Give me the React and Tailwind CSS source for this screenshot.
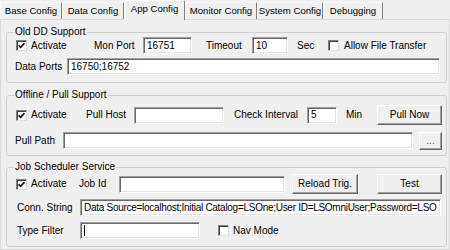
import React from 'react'

function Check({ checked }) {
  return (
    <span className="w-[11px] h-[11px] shrink-0 bg-white border border-t-[#808080] border-l-[#808080] border-r-[#dcdcdc] border-b-[#dcdcdc] shadow-[inset_1px_1px_0_#404040] flex items-center justify-center">
      {checked && (
        <svg width="7" height="7" viewBox="0 0 7 7">
          <path d="M0.6 3.4 L2.6 5.4 L6.4 1.2" fill="none" stroke="#000" strokeWidth="1.6" />
        </svg>
      )}
    </span>
  )
}

function TextBox({ className = '', value, caret }) {
  return (
    <div className={`h-[17px] shrink-0 bg-white border border-t-[#a0a0a0] border-l-[#a0a0a0] border-r-white border-b-white shadow-[inset_1px_1px_0_#696969,inset_-1px_-1px_0_#e3e3e3] flex items-center pl-[3px] overflow-hidden whitespace-nowrap ${className}`}>
      {caret && <span className="w-px h-[11px] bg-black" />}
      {value}
    </div>
  )
}

function Button({ className = '', children }) {
  return (
    <div className={`shrink-0 bg-[#f0f0f0] border border-t-white border-l-white border-r-[#696969] border-b-[#696969] shadow-[inset_-1px_-1px_0_#a0a0a0] flex items-center justify-center ${className}`}>
      {children}
    </div>
  )
}

function Group({ label, className = '', children }) {
  return (
    <div className={`relative w-[441px] border border-[#d0d0d0] rounded-[3px] ${className}`}>
      <span className="absolute left-[7px] top-[-7px] h-[12px] leading-[12px] px-[1px] bg-[#f0f0f0]">{label}</span>
      {children}
    </div>
  )
}

const tabs = [
  { name: 'Base Config', w: 'w-[62px]' },
  { name: 'Data Config', w: 'w-[62px]' },
  { name: 'App Config', w: 'w-[61px]', active: true },
  { name: 'Monitor Config', w: 'w-[72px]' },
  { name: 'System Config', w: 'w-[66px]' },
  { name: 'Debugging', w: 'w-[60px]' },
]

export default function App() {
  return (
    <div className="w-[450px] h-[250px] bg-[#f0f0f0] overflow-hidden font-['Liberation_Sans',Arial,sans-serif] text-[10px] leading-[12px] text-black">
      <div className="flex items-end h-[19px] relative z-10 text-[9.6px] whitespace-nowrap">
        {tabs.map((t) =>
          t.active ? (
            <div key={t.name} className={`${t.w} h-[20px] -mb-px bg-[#f0f0f0] border-t border-l border-r border-t-white border-l-white border-r-[#808080] rounded-t-[2px] flex items-center justify-center pb-[3px]`}>
              {t.name}
            </div>
          ) : (
            <div key={t.name} className={`${t.w} h-[17px] border-t border-l border-r border-t-[#f8f8f8] border-l-[#f8f8f8] border-r-[#808080] flex items-center justify-center`}>
              {t.name}
            </div>
          )
        )}
      </div>

      <div className="h-[231px] border border-[#d9d9d9] pt-[12px] pl-[5px]">
        <Group label="Old DD Support" className="pb-[7px]">
          <div className="flex items-center h-[17px] mt-[4px] pl-[9px]">
            <div className="flex items-center w-[78px]">
              <Check checked />
              <span className="ml-[4px]">Activate</span>
            </div>
            <span className="w-[49px]">Mon Port</span>
            <TextBox className="w-[49px]" value="16751" />
            <span className="w-[60px] pl-[14px]">Timeout</span>
            <TextBox className="w-[36px]" value="10" />
            <span className="w-[40px] pl-[9px]">Sec</span>
            <Check />
            <span className="ml-[5px]">Allow File Transfer</span>
          </div>
          <div className="flex items-center h-[17px] mt-[4px] pl-[8px]">
            <span className="w-[52px]">Data Ports</span>
            <TextBox className="w-[373px]" value="16750;16752" />
          </div>
        </Group>

        <Group label="Offline / Pull Support" className="mt-[12px] pb-[5px]">
          <div className="flex items-center h-[20px] mt-[9px] pl-[9px]">
            <div className="flex items-center w-[70px]">
              <Check checked />
              <span className="ml-[4px]">Activate</span>
            </div>
            <span className="w-[48px]">Pull Host</span>
            <TextBox className="w-[90px]" value="" />
            <span className="w-[83px] pl-[10px]">Check Interval</span>
            <TextBox className="w-[30px]" value="5" />
            <span className="w-[40px] pl-[9px]">Min</span>
            <Button className="w-[65px] h-[20px]">Pull Now</Button>
          </div>
          <div className="flex items-center h-[19px] mt-[6px] pl-[8px]">
            <span className="w-[48px]">Pull Path</span>
            <TextBox className="w-[350px]" value="" />
            <Button className="ml-[6px] w-[23px] h-[18px] text-[#606060]">...</Button>
          </div>
        </Group>

        <Group label="Job Scheduler Service" className="mt-[11px] pb-[7px]">
          <div className="flex items-center h-[20px] mt-[6px] pl-[9px]">
            <div className="flex items-center w-[63px]">
              <Check checked />
              <span className="ml-[4px]">Activate</span>
            </div>
            <span className="w-[40px]">Job Id</span>
            <TextBox className="w-[166px]" value="" />
            <Button className="ml-[7px] w-[66px] h-[20px]">Reload Trig.</Button>
            <Button className="ml-[19px] w-[65px] h-[20px]">Test</Button>
          </div>
          <div className="flex items-center h-[17px] mt-[5px] pl-[10px]">
            <span className="w-[63px]">Conn. String</span>
            <TextBox
              className="w-[361px] tracking-[-0.28px]"
              value="Data Source=localhost;Initial Catalog=LSOne;User ID=LSOmniUser;Password=LSO"
            />
          </div>
          <div className="flex items-center h-[17px] mt-[6px] pl-[10px]">
            <span className="w-[63px]">Type Filter</span>
            <TextBox className="w-[120px]" caret />
            <span className="ml-[18px]">
              <Check />
            </span>
            <span className="ml-[4px]">Nav Mode</span>
          </div>
        </Group>
      </div>
    </div>
  )
}
